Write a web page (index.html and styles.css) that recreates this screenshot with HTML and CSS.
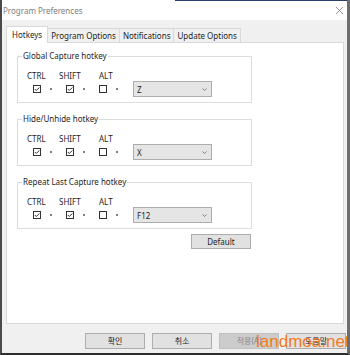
FILE: index.html
```html
<!DOCTYPE html>
<html lang="en" dir="ltr">
  <head>
    <meta charset="utf-8">
    <link rel="stylesheet" href="styles.css">
    <title>Program Preferences</title>
  </head>
  <body>
    <div class="window">
      <div class="titlebar">
        <span class="title">Program Preferences</span>
        <svg class="close" width="7" height="7" viewBox="0 0 7 7"><path d="M0 0L7 7M7 0L0 7" stroke="#7a7a7a" stroke-width="0.8"/></svg>
      </div>
      <div class="tabs">
        <div class="tab active">Hotkeys</div>
        <div class="tab">Program Options</div>
        <div class="tab">Notifications</div>
        <div class="tab">Update Options</div>
      </div>
      <div class="panel">
        <fieldset class="group">
          <legend>Global Capture hotkey</legend>
          <div class="keys">
            <span>CTRL</span>
            <span>SHIFT</span>
            <span>ALT</span>
            <span class="mod ctrl">
              <svg class="cb" width="8" height="8" viewBox="0 0 8 8"><rect x="0.5" y="0.5" width="7" height="7" fill="#fff" stroke="#333"/><path d="M1.8 4l1.5 1.5 3-3" fill="none" stroke="#333"/></svg>
              <i class="dot"></i>
            </span>
            <span class="mod shift">
              <svg class="cb" width="8" height="8" viewBox="0 0 8 8"><rect x="0.5" y="0.5" width="7" height="7" fill="#fff" stroke="#333"/><path d="M1.8 4l1.5 1.5 3-3" fill="none" stroke="#333"/></svg>
              <i class="dot"></i>
            </span>
            <span class="mod alt">
              <svg class="cb" width="8" height="8" viewBox="0 0 8 8"><rect x="0.5" y="0.5" width="7" height="7" fill="#fff" stroke="#333"/></svg>
              <i class="dot"></i>
            </span>
            <div class="combo">
              <span>Z</span>
              <svg width="5" height="3" viewBox="0 0 5 3"><path d="M0.5 0.5L2.5 2.5L4.5 0.5" fill="none" stroke="#666" stroke-width="0.8"/></svg>
            </div>
          </div>
        </fieldset>
        <fieldset class="group">
          <legend>Hide/Unhide hotkey</legend>
          <div class="keys">
            <span>CTRL</span>
            <span>SHIFT</span>
            <span>ALT</span>
            <span class="mod ctrl">
              <svg class="cb" width="8" height="8" viewBox="0 0 8 8"><rect x="0.5" y="0.5" width="7" height="7" fill="#fff" stroke="#333"/><path d="M1.8 4l1.5 1.5 3-3" fill="none" stroke="#333"/></svg>
              <i class="dot"></i>
            </span>
            <span class="mod shift">
              <svg class="cb" width="8" height="8" viewBox="0 0 8 8"><rect x="0.5" y="0.5" width="7" height="7" fill="#fff" stroke="#333"/><path d="M1.8 4l1.5 1.5 3-3" fill="none" stroke="#333"/></svg>
              <i class="dot"></i>
            </span>
            <span class="mod alt">
              <svg class="cb" width="8" height="8" viewBox="0 0 8 8"><rect x="0.5" y="0.5" width="7" height="7" fill="#fff" stroke="#333"/></svg>
              <i class="dot"></i>
            </span>
            <div class="combo">
              <span>X</span>
              <svg width="5" height="3" viewBox="0 0 5 3"><path d="M0.5 0.5L2.5 2.5L4.5 0.5" fill="none" stroke="#666" stroke-width="0.8"/></svg>
            </div>
          </div>
        </fieldset>
        <fieldset class="group">
          <legend>Repeat Last Capture hotkey</legend>
          <div class="keys">
            <span>CTRL</span>
            <span>SHIFT</span>
            <span>ALT</span>
            <span class="mod ctrl">
              <svg class="cb" width="8" height="8" viewBox="0 0 8 8"><rect x="0.5" y="0.5" width="7" height="7" fill="#fff" stroke="#333"/><path d="M1.8 4l1.5 1.5 3-3" fill="none" stroke="#333"/></svg>
              <i class="dot"></i>
            </span>
            <span class="mod shift">
              <svg class="cb" width="8" height="8" viewBox="0 0 8 8"><rect x="0.5" y="0.5" width="7" height="7" fill="#fff" stroke="#333"/><path d="M1.8 4l1.5 1.5 3-3" fill="none" stroke="#333"/></svg>
              <i class="dot"></i>
            </span>
            <span class="mod alt">
              <svg class="cb" width="8" height="8" viewBox="0 0 8 8"><rect x="0.5" y="0.5" width="7" height="7" fill="#fff" stroke="#333"/></svg>
              <i class="dot"></i>
            </span>
            <div class="combo">
              <span>F12</span>
              <svg width="5" height="3" viewBox="0 0 5 3"><path d="M0.5 0.5L2.5 2.5L4.5 0.5" fill="none" stroke="#666" stroke-width="0.8"/></svg>
            </div>
          </div>
        </fieldset>
        <div class="actions">
          <button class="btn default">Default</button>
        </div>
      </div>
      <div class="footer">
        <button class="btn">확인</button>
        <button class="btn">취소</button>
        <button class="btn" disabled>적용(A)</button>
        <button class="btn">도움말</button>
      </div>
      <div class="watermark">landmoa.net</div>
    </div>
  </body>
</html>
```
FILE: styles.css
```css
body {
  margin: 0;
  font: 8px "Noto Sans", "Noto Sans CJK KR", sans-serif;
  color: #1e1e1e;
}
.window {
  position: relative;
  width: 350px;
  height: 355px;
  box-sizing: border-box;
  background: #f0f0f0;
  border-left: 2px solid #4a4a4a;
  border-right: 3px solid #6e6e6e;
  border-bottom: 2px solid #2e2e2e;
  overflow: hidden;
}
.titlebar {
  height: 20px;
  display: flex;
  align-items: center;
  justify-content: space-between;
  padding: 0 4px 0 1px;
  background: linear-gradient(#2c3f6b, #2c3f6b) 173px 0 / 100% 1px no-repeat, #fff;
}
.title {
  color: #7d7d7d;
}
.close {
  display: block;
}
.tabs {
  display: flex;
  align-items: flex-end;
  height: 16px;
  margin: 6px 0 0 6px;
}
.tab {
  height: 14px;
  line-height: 13px;
  box-sizing: border-box;
  padding: 0 3px;
  margin-left: -1px;
  border: 1px solid #d9d9d9;
  border-bottom: 0;
  background: #f0f0f0;
}
.tab.active {
  position: relative;
  z-index: 1;
  height: 17px;
  line-height: 15px;
  padding: 0 5px;
  margin: 0 0 -1px -2px;
  background: #fff;
}
.panel {
  height: 282px;
  box-sizing: border-box;
  margin: 0 3px 0 4px;
  padding: 7px 0 0 10px;
  border: 1px solid #d9d9d9;
  background: #fff;
}
.group {
  width: 235px;
  height: 53px;
  min-width: 0;
  box-sizing: border-box;
  margin: 0;
  padding: 0 0 0 4px;
  border: 1px solid #dcdcdc;
}
.group + .group {
  margin-top: 10px;
}
.group legend {
  padding: 0 1px;
  line-height: 12px;
}
.keys {
  display: grid;
  grid-template-columns: 32px 40px 34px 79px;
  grid-template-rows: 11px 16px;
  margin: 8px 0 0 5px;
  line-height: 11px;
}
.mod {
  grid-row: 2;
  display: flex;
  align-items: center;
}
.mod.ctrl {
  padding-left: 6px;
}
.mod.shift {
  padding-left: 7px;
}
.cb {
  display: block;
}
.dot {
  width: 2px;
  height: 2px;
  margin-left: 9px;
  border-radius: 50%;
  background: #555;
}
.combo {
  grid-row: 2;
  display: flex;
  align-items: center;
  justify-content: space-between;
  height: 16px;
  box-sizing: border-box;
  padding: 0 4px 0 3px;
  border: 1px solid #adadad;
  background: #e5e5e5;
}
.combo svg {
  display: block;
}
.actions {
  width: 235px;
  display: flex;
  justify-content: flex-end;
  box-sizing: border-box;
  padding-right: 1px;
  margin-top: 5px;
}
.btn {
  width: 60px;
  height: 16px;
  padding: 0;
  font: inherit;
  line-height: 14px;
  color: #1e1e1e;
  border: 1px solid #adadad;
  background: #e1e1e1;
}
.btn.default {
  height: 15px;
  line-height: 13px;
}
.btn:disabled {
  color: #8a8a8a;
  border-color: #bfbfbf;
  background: #cccccc;
}
.footer {
  display: flex;
  justify-content: flex-end;
  gap: 7px;
  margin-top: 9px;
  padding-right: 1px;
}
.watermark {
  position: absolute;
  left: 254px;
  top: 332px;
  font: 17px "Liberation Sans", sans-serif;
  line-height: 20px;
  color: #f47a22;
}
```
